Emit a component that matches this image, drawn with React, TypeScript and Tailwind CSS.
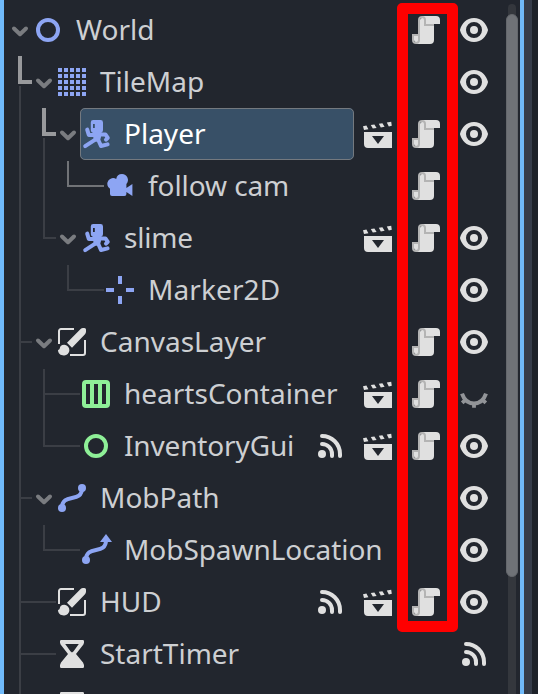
import type { ReactNode } from "react";

type IconName =
  | "node2d" | "tilemap" | "character" | "camera" | "marker" | "canvas"
  | "hbox" | "control" | "path" | "pathfollow" | "timer"
  | "signal" | "scene" | "script" | "visible" | "hidden";

const BLUE = "#8da5f3";
const GREEN = "#8eef97";
const LIGHT = "#e0e0e0";

const shapes: Record<IconName, ReactNode> = {
  node2d: <circle cx="8" cy="8" r="5" fill="none" stroke={BLUE} strokeWidth="2" />,
  control: <circle cx="8" cy="8" r="5" fill="none" stroke={GREEN} strokeWidth="2" />,
  tilemap: (
    <g fill={BLUE}>
      {[1, 4, 7, 10, 13].map((y) =>
        [1, 4, 7, 10, 13].map((x) => <rect key={`${x}-${y}`} x={x} y={y} width="2" height="2" />),
      )}
    </g>
  ),
  character: (
    <g fill="none" stroke={BLUE} strokeWidth="2" strokeLinecap="round" strokeLinejoin="round">
      <path
        d="M6.6 1h3.7a1.2 1.2 0 0 1 1.2 1.2v3.9a1.2 1.2 0 0 1-1.2 1.2H6.6a1.2 1.2 0 0 1-1.2-1.2V2.2A1.2 1.2 0 0 1 6.6 1zM6.5 3v2h.9V3z"
        fill={BLUE} fillRule="evenodd" stroke="none"
      />
      <path d="M3.6 5.8l.8 2.7h3.2M9.8 8.2h2.9l1.2 1.7-.9.9M2.6 14.1l5.2-3.4M9 10.6l1.5 3.4 3.3-.8" />
      <path d="M6.2 7h4.6l-.4 3-.8 2-2.6-.4z" fill={BLUE} stroke="none" />
    </g>
  ),
  camera: (
    <path
      fill={BLUE}
      d="M9 2a3 3 0 0 0-2.9 2.5A2.8 2.8 0 1 0 3 9.4V12a1 1 0 0 0 1 1h6.2a1 1 0 0 0 1-1v-1l3 2V7l-3 2V7A3 3 0 0 0 9 2z"
    />
  ),
  marker: <path fill={BLUE} d="M7 1h2v4H7zM7 11h2v4H7zM1 7h4v2H1zM11 7h4v2h-4z" />,
  canvas: (
    <>
      <path fill="none" stroke={LIGHT} d="M1.5 9V2.5a1 1 0 0 1 1-1H9M14.5 7v6.5a1 1 0 0 1-1 1H7" />
      <path
        fill={LIGHT}
        d="M13.5 1a1.8 1.8 0 0 0-1.2.5L5.5 8.4l2.5 2.5 6.5-6.8a1.8 1.8 0 0 0 .5-1.2V1.8a.8.8 0 0 0-.8-.8zM4.1 9.4c-1.5 0-2 .8-2.2 1.7-.2.5-.4.8-.9.9 0 1.8 1.3 2.7 2.9 2.7a2.6 2.6 0 0 0 2.8-2.6 2.6 2.6 0 0 0-2.6-2.7z"
      />
    </>
  ),
  hbox: (
    <path
      fill={GREEN} fillRule="evenodd"
      d="M3 1a2 2 0 0 0-2 2v10a2 2 0 0 0 2 2h10a2 2 0 0 0 2-2V3a2 2 0 0 0-2-2zM3 3h2v10H3zM7 3h2v10H7zM11 3h2v10h-2z"
    />
  ),
  path: (
    <>
      <path fill="none" stroke={BLUE} strokeWidth="2" d="M3 13C3 5 13 11 13 3" />
      <circle cx="3" cy="13" r="2" fill={BLUE} />
      <circle cx="13" cy="3" r="2" fill={BLUE} />
    </>
  ),
  pathfollow: (
    <>
      <path fill="none" stroke={BLUE} strokeWidth="2" d="M3 13C3 5 13 11 13 3" />
      <circle cx="3" cy="13" r="2" fill={BLUE} />
      <path fill={BLUE} d="M13 0l3 4h-6z" />
    </>
  ),
  timer: (
    <path
      fill={LIGHT} fillRule="evenodd"
      d="M2.6 1a.6.6 0 0 0-.6.6v.8l.3.8L6 8l-3.5 4.2-.5 1.3v.9a.6.6 0 0 0 .6.6h10.8a.6.6 0 0 0 .6-.6v-.9l-.5-1.3L10 8l3.7-4.8.3-.8v-.8a.6.6 0 0 0-.6-.6zM4.6 3h6.8L8.8 6.6 8 7.2l-.8-.6z"
    />
  ),
  signal: (
    <>
      <path fill="none" stroke={LIGHT} strokeWidth="2" strokeLinecap="round" d="M4 3a9 9 0 0 1 9 9v1M4 7a5 5 0 0 1 5 5v1" />
      <circle cx="4" cy="12" r="2" fill={LIGHT} />
    </>
  ),
  scene: (
    <path
      fill={LIGHT} fillRule="evenodd"
      d="M1 7v6a2 2 0 0 0 2 2h12V7zM5 9h6l-3 4zM.5 4.1l1.7-.3 1 1.8-2.2.4zM4.4 3.5l1.8-.3 1.1 1.8-1.9.3zM8.4 2.9l1.8-.3 1.1 1.8-1.9.3zM12.4 2.2l2.2-.3.3 2-1.5.3z"
    />
  ),
  script: (
    <>
      <path
        fill={LIGHT}
        d="M6 1v1a1 1 0 0 0-1 1v10H4v-2H2v2a1 1 0 0 0 .5.866A1 1 0 0 0 3 14v1h7a2 2 0 0 0 2-2V5h3V3a2 2 0 0 0-2-2z"
      />
      <path
        fill="#b4b4b4"
        fillRule="evenodd"
        d="M6 1a2 2 0 0 0-2 2v7H1v3a2 2 0 0 0 4 0V3a1 1 0 0 1 2 0v3h5V5H8V3a2 2 0 0 0-2-2zM2 11h2v2a1 1 0 0 1-2 0z"
      />
    </>
  ),
  visible: (
    <>
      <path
        fill={LIGHT} fillRule="evenodd"
        d="M8 2C4.2 2 1.9 4.8 1.04 7.73a1 1 0 0 0 0 .54C1.9 11.2 4.2 14 8 14s6.1-2.8 6.96-5.73a1 1 0 0 0 0-.54C14.1 4.8 11.8 2 8 2zM8 4a4 4 0 0 1 0 8 4 4 0 0 1 0-8z"
      />
      <circle cx="8" cy="8" r="2" fill={LIGHT} />
    </>
  ),
  hidden: (
    <g fill="none" stroke="#929498" strokeWidth="2">
      <path d="M2 7.8c1.1 3.2 3.3 4.9 6 4.9s4.9-1.7 6-4.9" />
      <path d="M8 12.6v2.3M3.8 10.8l-1.7 1.6M12.2 10.8l1.7 1.6" strokeWidth="1.9" />
    </g>
  ),
};

function Icon({ name }: { name: IconName }) {
  return (
    <svg viewBox="0 0 16 16" className="block size-8 shrink-0">
      {shapes[name]}
    </svg>
  );
}

function Chevron() {
  return (
    <svg viewBox="0 0 24 32" className="block h-8 w-6 shrink-0">
      <path d="M6 14.5l6 5.7 6-5.7" fill="none" stroke="#7a7c80" strokeWidth="4" strokeLinecap="round" strokeLinejoin="round" />
    </svg>
  );
}

type Row = {
  label: string;
  icon: IconName;
  indent: string;
  open?: boolean;
  selected?: boolean;
  tracking?: string;
  actions: IconName[];
};

const rows: Row[] = [
  { label: "World", icon: "node2d", indent: "pl-1", open: true, actions: ["script", "visible"] },
  { label: "TileMap", icon: "tilemap", indent: "pl-7", open: true, actions: ["visible"] },
  { label: "Player", icon: "character", indent: "pl-[52px]", open: true, selected: true, actions: ["scene", "script", "visible"] },
  { label: "follow cam", icon: "camera", indent: "pl-[76px]", tracking: "tracking-[-0.08px]", actions: ["script"] },
  { label: "slime", icon: "character", indent: "pl-[52px]", open: true, tracking: "tracking-[-0.2px]", actions: ["scene", "script", "visible"] },
  { label: "Marker2D", icon: "marker", indent: "pl-[76px]", tracking: "tracking-[0.1px]", actions: ["visible"] },
  { label: "CanvasLayer", icon: "canvas", indent: "pl-7", open: true, actions: ["script", "visible"] },
  { label: "heartsContainer", icon: "hbox", indent: "pl-[52px]", actions: ["scene", "script", "hidden"] },
  { label: "InventoryGui", icon: "control", indent: "pl-[52px]", tracking: "tracking-[-0.15px]", actions: ["signal", "scene", "script", "visible"] },
  { label: "MobPath", icon: "path", indent: "pl-7", open: true, actions: ["visible"] },
  { label: "MobSpawnLocation", icon: "pathfollow", indent: "pl-[52px]", tracking: "tracking-[-0.06px]", actions: ["visible"] },
  { label: "HUD", icon: "canvas", indent: "pl-7", actions: ["signal", "scene", "script", "visible"] },
  { label: "StartTimer", icon: "timer", indent: "pl-7", actions: ["signal"] },
  { label: "", icon: "timer", indent: "pl-7", actions: [] },
];

function TreeRow({ row }: { row: Row }) {
  // The camera row has no visibility toggle, so its script icon keeps the script column.
  const pad = row.label === "follow cam" ? "pr-[78px]" : "pr-[30px]";
  return (
    <div className={`flex h-[52px] shrink-0 items-center ${row.indent} ${pad}`}>
      <div className="flex w-6 shrink-0">{row.open && <Chevron />}</div>
      <div
        className={`flex h-full items-center gap-3 ${
          row.selected ? "w-[274px] rounded-[5px] bg-[#385067] text-white outline outline-1 -outline-offset-1 outline-[#74797f]" : "text-[#cdcfd2]"
        }`}
      >
        <Icon name={row.icon} />
        <span className={`whitespace-nowrap pb-0.5 text-[28px] leading-[38px] ${row.tracking ?? ""}`}>{row.label}</span>
      </div>
      <div className="ml-auto flex gap-4">
        {row.actions.map((a) => (
          <Icon key={a} name={a} />
        ))}
      </div>
    </div>
  );
}

function Guides() {
  return (
    <svg className="pointer-events-none absolute inset-0" width="538" height="694" fill="none" strokeWidth="2">
      <path
        stroke="#3b3e45"
        d="M20 86V694M20 342H32M20 498H32M20 602H56M20 654H56M44 138V238H56M68 265V290H104M44 369V446H80M44 394H80M44 525V550H80"
      />
      <path stroke="#717377" d="M68 161V186H104" />
      <path stroke="#98999c" strokeWidth="4" d="M20 56V82H32M44 108V134H56" />
    </svg>
  );
}

export default function App() {
  return (
    <div className="relative flex h-[694px] w-[538px] overflow-hidden bg-[#22262e] font-['Noto_Sans',sans-serif]">
      <div className="w-1 shrink-0 bg-[#70bafa]" />
      <div className="flex w-[516px] shrink-0 flex-col pt-1">
        {rows.map((row, i) => (
          <TreeRow key={i} row={row} />
        ))}
      </div>
      <div className="w-1 shrink-0 bg-[#70bafa]" />
      <div className="w-2 shrink-0 bg-[#363d4a]" />
      <div className="w-1.5 shrink-0 bg-[#1d2229]" />
      <Guides />
      <div className="absolute left-[508px] top-1 h-[700px] w-2 rounded-full bg-[#34373d]" />
      <div className="absolute left-[506px] top-3.5 h-[563px] w-3 rounded-full border border-[#64676c] bg-[#6f7277]" />
      <div className="absolute left-[397px] top-[3px] h-[629px] w-[61px] rounded-[5px] border-[11px] border-[#ff0000]" />
    </div>
  );
}
